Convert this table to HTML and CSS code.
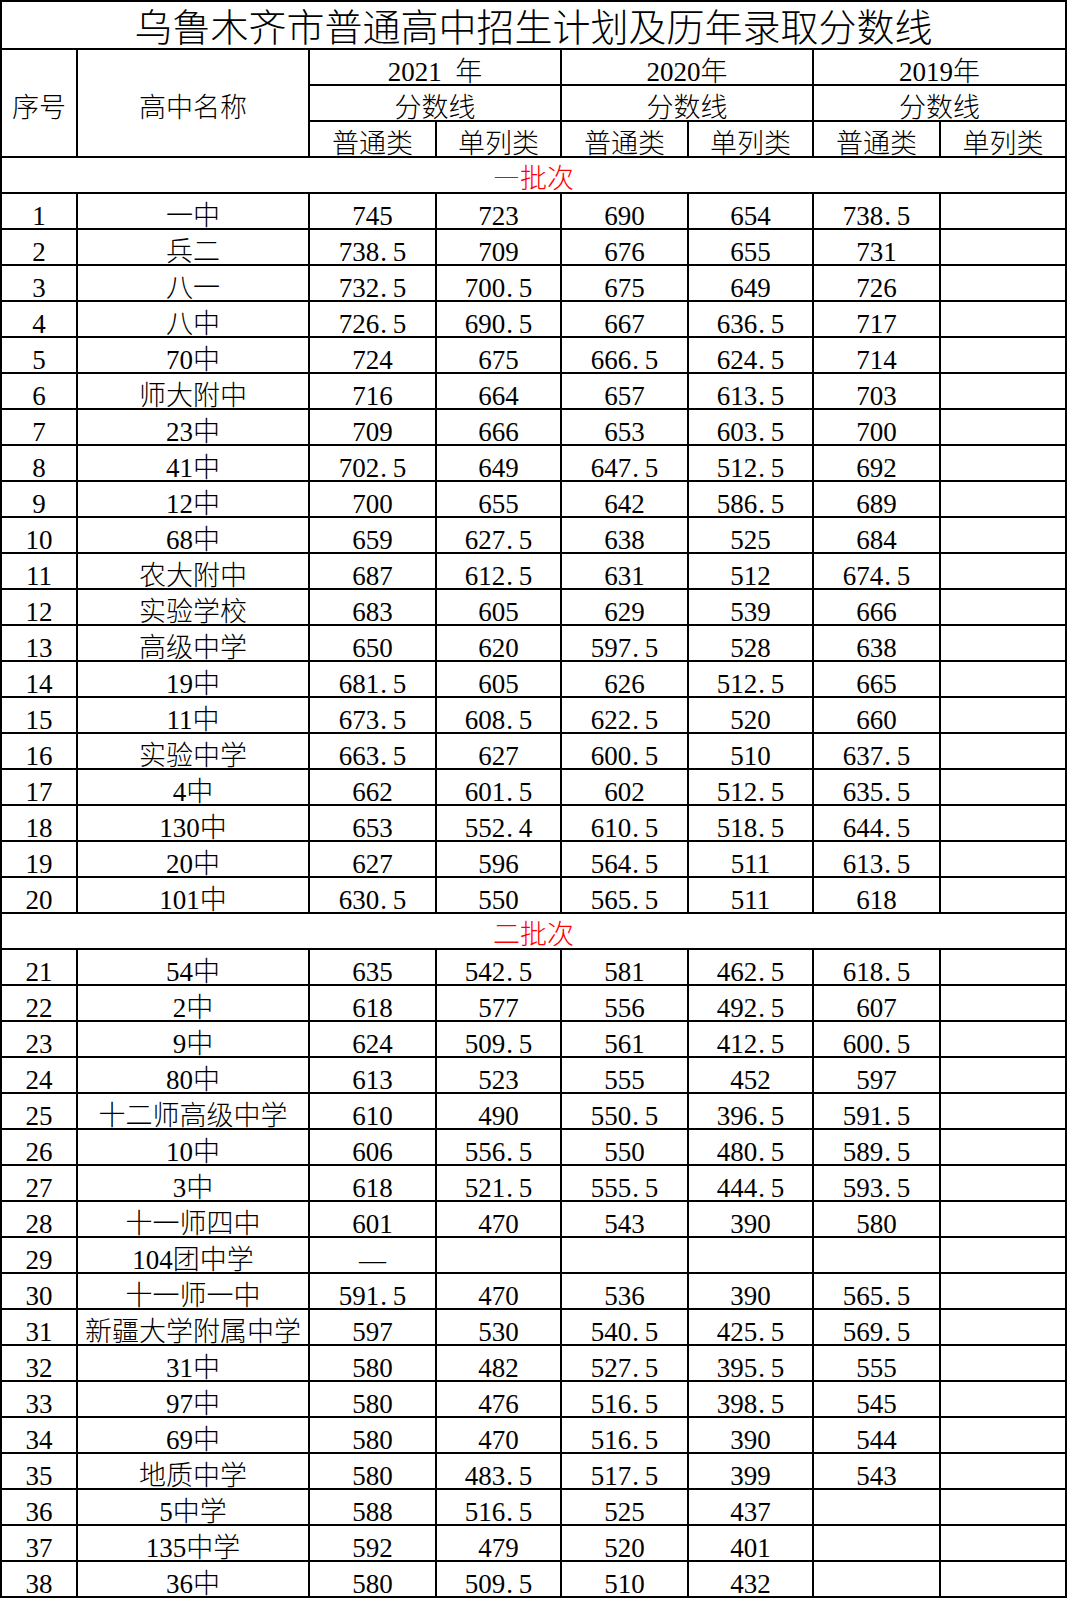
FILE: index.html
```html
<!DOCTYPE html>
<html lang="zh-CN">
<head>
<meta charset="utf-8">
<title>乌鲁木齐市普通高中招生计划及历年录取分数线</title>
<link rel="stylesheet" href="styles.css">
</head>
<body>
<div class="sheet">
  <div class="cell title">乌鲁木齐市普通高中招生计划及历年录取分数线</div>
  <div class="cell h-no">序号</div>
  <div class="cell h-name">高中名称</div>
  <div class="cell h-y1">2021&ensp;年</div>
  <div class="cell h-y2">2020年</div>
  <div class="cell h-y3">2019年</div>
  <div class="cell h-s1">分数线</div>
  <div class="cell h-s2">分数线</div>
  <div class="cell h-s3">分数线</div>
  <div class="cell h-t1">普通类</div>
  <div class="cell h-t2">单列类</div>
  <div class="cell h-t3">普通类</div>
  <div class="cell h-t4">单列类</div>
  <div class="cell h-t5">普通类</div>
  <div class="cell h-t6">单列类</div>

  <div class="cell sec">—批次</div>

  <div class="cell">1</div><div class="cell">一中</div><div class="cell">745</div><div class="cell">723</div><div class="cell">690</div><div class="cell">654</div><div class="cell">738<span class="pt">.</span>5</div><div class="cell"></div>
  <div class="cell">2</div><div class="cell">兵二</div><div class="cell">738<span class="pt">.</span>5</div><div class="cell">709</div><div class="cell">676</div><div class="cell">655</div><div class="cell">731</div><div class="cell"></div>
  <div class="cell">3</div><div class="cell">八一</div><div class="cell">732<span class="pt">.</span>5</div><div class="cell">700<span class="pt">.</span>5</div><div class="cell">675</div><div class="cell">649</div><div class="cell">726</div><div class="cell"></div>
  <div class="cell">4</div><div class="cell">八中</div><div class="cell">726<span class="pt">.</span>5</div><div class="cell">690<span class="pt">.</span>5</div><div class="cell">667</div><div class="cell">636<span class="pt">.</span>5</div><div class="cell">717</div><div class="cell"></div>
  <div class="cell">5</div><div class="cell">70中</div><div class="cell">724</div><div class="cell">675</div><div class="cell">666<span class="pt">.</span>5</div><div class="cell">624<span class="pt">.</span>5</div><div class="cell">714</div><div class="cell"></div>
  <div class="cell">6</div><div class="cell">师大附中</div><div class="cell">716</div><div class="cell">664</div><div class="cell">657</div><div class="cell">613<span class="pt">.</span>5</div><div class="cell">703</div><div class="cell"></div>
  <div class="cell">7</div><div class="cell">23中</div><div class="cell">709</div><div class="cell">666</div><div class="cell">653</div><div class="cell">603<span class="pt">.</span>5</div><div class="cell">700</div><div class="cell"></div>
  <div class="cell">8</div><div class="cell">41中</div><div class="cell">702<span class="pt">.</span>5</div><div class="cell">649</div><div class="cell">647<span class="pt">.</span>5</div><div class="cell">512<span class="pt">.</span>5</div><div class="cell">692</div><div class="cell"></div>
  <div class="cell">9</div><div class="cell">12中</div><div class="cell">700</div><div class="cell">655</div><div class="cell">642</div><div class="cell">586<span class="pt">.</span>5</div><div class="cell">689</div><div class="cell"></div>
  <div class="cell">10</div><div class="cell">68中</div><div class="cell">659</div><div class="cell">627<span class="pt">.</span>5</div><div class="cell">638</div><div class="cell">525</div><div class="cell">684</div><div class="cell"></div>
  <div class="cell">11</div><div class="cell">农大附中</div><div class="cell">687</div><div class="cell">612<span class="pt">.</span>5</div><div class="cell">631</div><div class="cell">512</div><div class="cell">674<span class="pt">.</span>5</div><div class="cell"></div>
  <div class="cell">12</div><div class="cell">实验学校</div><div class="cell">683</div><div class="cell">605</div><div class="cell">629</div><div class="cell">539</div><div class="cell">666</div><div class="cell"></div>
  <div class="cell">13</div><div class="cell">高级中学</div><div class="cell">650</div><div class="cell">620</div><div class="cell">597<span class="pt">.</span>5</div><div class="cell">528</div><div class="cell">638</div><div class="cell"></div>
  <div class="cell">14</div><div class="cell">19中</div><div class="cell">681<span class="pt">.</span>5</div><div class="cell">605</div><div class="cell">626</div><div class="cell">512<span class="pt">.</span>5</div><div class="cell">665</div><div class="cell"></div>
  <div class="cell">15</div><div class="cell">11中</div><div class="cell">673<span class="pt">.</span>5</div><div class="cell">608<span class="pt">.</span>5</div><div class="cell">622<span class="pt">.</span>5</div><div class="cell">520</div><div class="cell">660</div><div class="cell"></div>
  <div class="cell">16</div><div class="cell">实验中学</div><div class="cell">663<span class="pt">.</span>5</div><div class="cell">627</div><div class="cell">600<span class="pt">.</span>5</div><div class="cell">510</div><div class="cell">637<span class="pt">.</span>5</div><div class="cell"></div>
  <div class="cell">17</div><div class="cell">4中</div><div class="cell">662</div><div class="cell">601<span class="pt">.</span>5</div><div class="cell">602</div><div class="cell">512<span class="pt">.</span>5</div><div class="cell">635<span class="pt">.</span>5</div><div class="cell"></div>
  <div class="cell">18</div><div class="cell">130中</div><div class="cell">653</div><div class="cell">552<span class="pt">.</span>4</div><div class="cell">610<span class="pt">.</span>5</div><div class="cell">518<span class="pt">.</span>5</div><div class="cell">644<span class="pt">.</span>5</div><div class="cell"></div>
  <div class="cell">19</div><div class="cell">20中</div><div class="cell">627</div><div class="cell">596</div><div class="cell">564<span class="pt">.</span>5</div><div class="cell">511</div><div class="cell">613<span class="pt">.</span>5</div><div class="cell"></div>
  <div class="cell">20</div><div class="cell">101中</div><div class="cell">630<span class="pt">.</span>5</div><div class="cell">550</div><div class="cell">565<span class="pt">.</span>5</div><div class="cell">511</div><div class="cell">618</div><div class="cell"></div>

  <div class="cell sec">二批次</div>

  <div class="cell">21</div><div class="cell">54中</div><div class="cell">635</div><div class="cell">542<span class="pt">.</span>5</div><div class="cell">581</div><div class="cell">462<span class="pt">.</span>5</div><div class="cell">618<span class="pt">.</span>5</div><div class="cell"></div>
  <div class="cell">22</div><div class="cell">2中</div><div class="cell">618</div><div class="cell">577</div><div class="cell">556</div><div class="cell">492<span class="pt">.</span>5</div><div class="cell">607</div><div class="cell"></div>
  <div class="cell">23</div><div class="cell">9中</div><div class="cell">624</div><div class="cell">509<span class="pt">.</span>5</div><div class="cell">561</div><div class="cell">412<span class="pt">.</span>5</div><div class="cell">600<span class="pt">.</span>5</div><div class="cell"></div>
  <div class="cell">24</div><div class="cell">80中</div><div class="cell">613</div><div class="cell">523</div><div class="cell">555</div><div class="cell">452</div><div class="cell">597</div><div class="cell"></div>
  <div class="cell">25</div><div class="cell">十二师高级中学</div><div class="cell">610</div><div class="cell">490</div><div class="cell">550<span class="pt">.</span>5</div><div class="cell">396<span class="pt">.</span>5</div><div class="cell">591<span class="pt">.</span>5</div><div class="cell"></div>
  <div class="cell">26</div><div class="cell">10中</div><div class="cell">606</div><div class="cell">556<span class="pt">.</span>5</div><div class="cell">550</div><div class="cell">480<span class="pt">.</span>5</div><div class="cell">589<span class="pt">.</span>5</div><div class="cell"></div>
  <div class="cell">27</div><div class="cell">3中</div><div class="cell">618</div><div class="cell">521<span class="pt">.</span>5</div><div class="cell">555<span class="pt">.</span>5</div><div class="cell">444<span class="pt">.</span>5</div><div class="cell">593<span class="pt">.</span>5</div><div class="cell"></div>
  <div class="cell">28</div><div class="cell">十一师四中</div><div class="cell">601</div><div class="cell">470</div><div class="cell">543</div><div class="cell">390</div><div class="cell">580</div><div class="cell"></div>
  <div class="cell">29</div><div class="cell">104团中学</div><div class="cell">—</div><div class="cell"></div><div class="cell"></div><div class="cell"></div><div class="cell"></div><div class="cell"></div>
  <div class="cell">30</div><div class="cell">十一师一中</div><div class="cell">591<span class="pt">.</span>5</div><div class="cell">470</div><div class="cell">536</div><div class="cell">390</div><div class="cell">565<span class="pt">.</span>5</div><div class="cell"></div>
  <div class="cell">31</div><div class="cell">新疆大学附属中学</div><div class="cell">597</div><div class="cell">530</div><div class="cell">540<span class="pt">.</span>5</div><div class="cell">425<span class="pt">.</span>5</div><div class="cell">569<span class="pt">.</span>5</div><div class="cell"></div>
  <div class="cell">32</div><div class="cell">31中</div><div class="cell">580</div><div class="cell">482</div><div class="cell">527<span class="pt">.</span>5</div><div class="cell">395<span class="pt">.</span>5</div><div class="cell">555</div><div class="cell"></div>
  <div class="cell">33</div><div class="cell">97中</div><div class="cell">580</div><div class="cell">476</div><div class="cell">516<span class="pt">.</span>5</div><div class="cell">398<span class="pt">.</span>5</div><div class="cell">545</div><div class="cell"></div>
  <div class="cell">34</div><div class="cell">69中</div><div class="cell">580</div><div class="cell">470</div><div class="cell">516<span class="pt">.</span>5</div><div class="cell">390</div><div class="cell">544</div><div class="cell"></div>
  <div class="cell">35</div><div class="cell">地质中学</div><div class="cell">580</div><div class="cell">483<span class="pt">.</span>5</div><div class="cell">517<span class="pt">.</span>5</div><div class="cell">399</div><div class="cell">543</div><div class="cell"></div>
  <div class="cell">36</div><div class="cell">5中学</div><div class="cell">588</div><div class="cell">516<span class="pt">.</span>5</div><div class="cell">525</div><div class="cell">437</div><div class="cell"></div><div class="cell"></div>
  <div class="cell">37</div><div class="cell">135中学</div><div class="cell">592</div><div class="cell">479</div><div class="cell">520</div><div class="cell">401</div><div class="cell"></div><div class="cell"></div>
  <div class="cell">38</div><div class="cell">36中</div><div class="cell">580</div><div class="cell">509<span class="pt">.</span>5</div><div class="cell">510</div><div class="cell">432</div><div class="cell"></div><div class="cell"></div>
</div>
</body>
</html>
```

FILE: styles.css
```css
html, body {
  margin: 0;
  padding: 0;
  background: #fff;
}

.sheet {
  display: grid;
  grid-template-columns: 76px 232px 127px 125px 127px 125px 127px 126px;
  grid-template-rows: 48px;
  grid-auto-rows: 36px;
  width: 1067px;
  box-sizing: border-box;
  border-top: 2px solid #000;
  border-left: 2px solid #000;
  font-family: "Liberation Serif", "Noto Sans CJK SC", serif;
  font-size: 27px;
  font-weight: 300;
  color: #000;
}

.cell {
  box-sizing: border-box;
  border-right: 2px solid #000;
  border-bottom: 2px solid #000;
  display: flex;
  align-items: center;
  justify-content: center;
  padding-top: 10px;
  line-height: 24px;
  white-space: nowrap;
  overflow: hidden;
}

.pt {
  display: inline-block;
  width: 0.5em;
  padding-left: 1px;
  box-sizing: border-box;
  text-align: left;
}

.title {
  grid-column: 1 / -1;
  grid-row: 1;
  font-size: 38px;
  line-height: 38px;
  padding-top: 6px;
  overflow: visible;
}

.h-no   { grid-column: 1; grid-row: 2 / 5; }
.h-name { grid-column: 2; grid-row: 2 / 5; }
.h-y1   { grid-column: 3 / 5; grid-row: 2; }
.h-y2   { grid-column: 5 / 7; grid-row: 2; }
.h-y3   { grid-column: 7 / 9; grid-row: 2; }
.h-s1   { grid-column: 3 / 5; grid-row: 3; }
.h-s2   { grid-column: 5 / 7; grid-row: 3; }
.h-s3   { grid-column: 7 / 9; grid-row: 3; }
.h-t1   { grid-column: 3; grid-row: 4; }
.h-t2   { grid-column: 4; grid-row: 4; }
.h-t3   { grid-column: 5; grid-row: 4; }
.h-t4   { grid-column: 6; grid-row: 4; }
.h-t5   { grid-column: 7; grid-row: 4; }
.h-t6   { grid-column: 8; grid-row: 4; }

.sec {
  grid-column: 1 / -1;
  color: #ff0000;
  font-family: "Noto Sans CJK SC", sans-serif;
  line-height: 34px;
  padding-top: 4px;
  overflow: visible;
}
```
